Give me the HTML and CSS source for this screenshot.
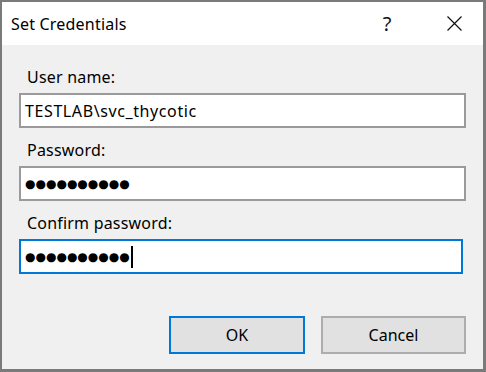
FILE: index.html
```html
<!DOCTYPE html>
<html>
<head>
<meta charset="utf-8">
<link rel="stylesheet" href="styles.css">
</head>
<body>
<div class="dialog">
  <div class="titlebar">
    <span class="title">Set Credentials</span>
    <span class="help">?</span>
    <span class="close"><svg width="15" height="15" viewBox="0 0 15 15"><path d="M0.5 0.5 L14.5 14.5 M14.5 0.5 L0.5 14.5" stroke="#111" stroke-width="1.2" fill="none"/></svg></span>
  </div>
  <div class="content">
    <div class="field">
      <label class="label">User name:</label>
      <div class="input"><span class="value">TESTLAB\svc_thycotic</span></div>
    </div>
    <div class="field">
      <label class="label">Password:</label>
      <div class="input"><span class="dots">●●●●●●●●●●</span></div>
    </div>
    <div class="field narrow">
      <label class="label">Confirm password:</label>
      <div class="input focused"><span class="dots">●●●●●●●●●●</span><span class="caret"></span></div>
    </div>
    <div class="buttons">
      <button class="btn btn-default">OK</button>
      <button class="btn btn-cancel">Cancel</button>
    </div>
  </div>
</div>
</body>
</html>
```

FILE: styles.css
```css
html, body {
  margin: 0;
  padding: 0;
  background: #f0f0f0;
}
.dialog {
  width: 486px;
  height: 372px;
  box-sizing: border-box;
  border-style: solid;
  border-color: #7a7a7a;
  border-width: 2px 3px 3px 2px;
  background: #f0f0f0;
  display: flex;
  flex-direction: column;
  font-family: "Noto Sans", "Open Sans", sans-serif;
  font-size: 16px;
  color: #000;
}
.titlebar {
  height: 43px;
  background: #fff;
  display: flex;
  align-items: center;
  padding: 0 19px 0 9px;
  gap: 47px;
}
.title {
  font-size: 16px;
  letter-spacing: 0.2px;
  flex: 1;
  color: #000;
}
.help {
  width: 20px;
  text-align: center;
  font-size: 20px;
  color: #111;
}
.close {
  width: 20px;
  display: flex;
  justify-content: center;
}
.content {
  flex: 1;
  padding: 22px 17px 0 17px;
  display: flex;
  flex-direction: column;
  gap: 12px;
}
.field {
  display: flex;
  flex-direction: column;
}
.field.narrow {
  margin-right: 3px;
}
.label {
  line-height: 20px;
  height: 20px;
  margin-bottom: 6px;
  padding-left: 8px;
  letter-spacing: 0.2px;
}
.input {
  height: 35px;
  box-sizing: border-box;
  border: 2px solid #9a9a9a;
  background: #fff;
  padding: 0 4px;
  line-height: 28px;
  display: flex;
  align-items: center;
}
.value {
  letter-spacing: 0.6px;
}
.input.focused {
  border-color: #0078d7;
}
.dots {
  font-family: "DejaVu Sans", sans-serif;
  font-size: 12px;
  letter-spacing: 0;
  color: #000;
}
.caret {
  display: inline-block;
  width: 2px;
  height: 22px;
  background: #000;
  margin-left: 1px;
}
.buttons {
  display: flex;
  justify-content: flex-end;
  gap: 16px;
  margin-top: 30px;
}
.btn {
  height: 38px;
  box-sizing: border-box;
  background: #e1e1e1;
  border: 2px solid #adadad;
  font-family: "Noto Sans", "Open Sans", sans-serif;
  font-size: 16px;
  color: #000;
  padding: 0;
}
.btn-default {
  width: 136px;
  border-color: #0078d7;
}
.btn-cancel {
  width: 145px;
}
```
